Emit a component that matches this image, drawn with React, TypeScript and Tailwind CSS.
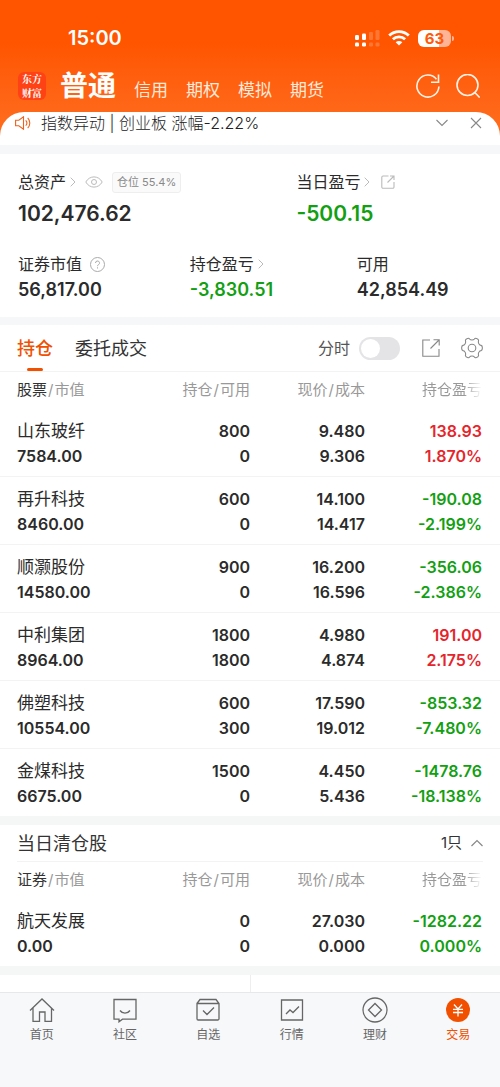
import { ReactNode, useState } from "react";

type Holding = {
  name: string;
  value: string;
  held: string;
  available: string;
  price: string;
  cost: string;
  profit: string;
  ratio: string;
};

const ACCOUNTS = ["信用", "期权", "模拟", "期货"];

const HOLDINGS: Holding[] = [
  { name: "山东玻纤", value: "7584.00", held: "800", available: "0", price: "9.480", cost: "9.306", profit: "138.93", ratio: "1.870%" },
  { name: "再升科技", value: "8460.00", held: "600", available: "0", price: "14.100", cost: "14.417", profit: "-190.08", ratio: "-2.199%" },
  { name: "顺灏股份", value: "14580.00", held: "900", available: "0", price: "16.200", cost: "16.596", profit: "-356.06", ratio: "-2.386%" },
  { name: "中利集团", value: "8964.00", held: "1800", available: "1800", price: "4.980", cost: "4.874", profit: "191.00", ratio: "2.175%" },
  { name: "佛塑科技", value: "10554.00", held: "600", available: "300", price: "17.590", cost: "19.012", profit: "-853.32", ratio: "-7.480%" },
  { name: "金煤科技", value: "6675.00", held: "1500", available: "0", price: "4.450", cost: "5.436", profit: "-1478.76", ratio: "-18.138%" },
];

const CLEARED: Holding[] = [
  { name: "航天发展", value: "0.00", held: "0", available: "0", price: "27.030", cost: "0.000", profit: "-1282.22", ratio: "0.000%" },
];

function profitColor(profit: string): string {
  return profit.startsWith("-") ? "text-[#12a012]" : "text-[#e5252b]";
}

function Icon({ className, children, box = 24 }: { className: string; children: ReactNode; box?: number }) {
  return (
    <svg
      viewBox={`0 0 ${box} ${box}`}
      className={`shrink-0 ${className}`}
      fill="none"
      stroke="currentColor"
      strokeWidth="1.3"
      aria-hidden="true"
    >
      {children}
    </svg>
  );
}

function Chevron() {
  return (
    <svg viewBox="0 0 6 10" className="h-[10px] w-[6px] shrink-0 text-[#bbbbbb]" fill="none" stroke="currentColor" aria-hidden="true">
      <path d="M.7.7 5 5 .7 9.3" />
    </svg>
  );
}

function StatusBar() {
  return (
    <div className="flex h-6 items-center justify-between pr-[46px] pl-[68px] text-white">
      <span className="text-[20px] leading-6 font-semibold">15:00</span>
      <div className="flex items-center gap-2">
        <svg viewBox="0 0 25 17" className="h-[17px] w-[25px]" fill="currentColor" aria-hidden="true">
          <rect x="0" y="5" width="4" height="5" rx="1.2" />
          <rect x="7" y="3.5" width="4" height="6.5" rx="1.2" />
          <rect x="0" y="12.5" width="4" height="4" rx="1.2" />
          <rect x="7" y="12.5" width="4" height="4" rx="1.2" />
          <g opacity="0.2">
            <rect x="14" y="2" width="4" height="8" rx="1.2" />
            <rect x="20.5" y="0" width="4" height="10" rx="1.2" />
            <rect x="14" y="12.5" width="4" height="4" rx="1.2" />
            <rect x="20.5" y="12.5" width="4" height="4" rx="1.2" />
          </g>
        </svg>
        <svg viewBox="0 0 22 16" className="h-4 w-[22px]" fill="none" stroke="currentColor" strokeWidth="2.8" aria-hidden="true">
          <path d="M1.2 5.6a14 14 0 0 1 19.6 0" />
          <path d="M4.9 9.3a8.7 8.7 0 0 1 12.2 0" />
          <path d="M11 15.6 7.7 12.3a4.7 4.7 0 0 1 6.6 0z" fill="currentColor" stroke="none" />
        </svg>
        <div className="flex items-center gap-px">
          <span className="h-[17px] w-[33px] rounded-[6px] bg-linear-to-r from-white from-63% to-[#ffb595] to-63% text-center text-[15px] leading-[17px] font-bold text-[#ff5a08]">
            63
          </span>
          <span className="h-[5px] w-[2px] rounded-r-sm bg-[#ffb595]" />
        </div>
      </div>
    </div>
  );
}

function Header() {
  return (
    <header className="bg-linear-to-b from-[#ff5500] from-30% to-[#ff7020] pt-[26px]">
      <StatusBar />
      <div className="mt-4 mb-[6px] flex h-10 items-center pr-5 pl-[18px] text-white">
        <div className="flex h-7 w-7 items-center justify-center rounded-[6px] bg-[#ff4215] font-['Noto_Serif_CJK_SC','Noto_Sans_CJK_SC',serif] text-[10px] leading-[14px] font-bold">
          <span>东方<br />财富</span>
        </div>
        <nav className="ml-[14px] flex items-baseline gap-[18px]">
          <a href="#normal" className="text-[28px] leading-10 font-bold">普通</a>
          {ACCOUNTS.map((a) => (
            <a key={a} href={`#${a}`} className="text-[17px] text-[#ffeadb]">{a}</a>
          ))}
        </nav>
        <div className="ml-auto flex items-center gap-4 text-[#fff3e8]">
          <button type="button" aria-label="刷新">
            <Icon className="h-6 w-6">
              <path d="M22.9 12.5A11 11 0 1 1 20.5 5.2M22.5.5V8.2H15" strokeWidth="1.6" />
            </Icon>
          </button>
          <button type="button" aria-label="搜索">
            <Icon className="h-6 w-6">
              <circle cx="11.5" cy="11" r="10.5" strokeWidth="1.6" />
              <path d="m18.8 18.5 4.9 5" strokeWidth="1.6" />
            </Icon>
          </button>
        </div>
      </div>
      <div className="flex h-[33px] items-center rounded-t-[24px] bg-white pr-[18px] pb-[11px] pl-[15px]">
        <svg viewBox="0 0 16 14" className="h-[14px] w-4 text-[#f0601a]" fill="none" stroke="currentColor" strokeWidth="1.1" aria-hidden="true">
          <path d="M.6 4.2h3.2L8.5.8v12.4L3.8 9.8H.6zM10.7 4.3a4 4 0 0 1 0 5.4M12.7 1.8a7.5 7.5 0 0 1 0 10.4" />
        </svg>
        <p className="ml-[10px] text-[16px] leading-[22px] font-light text-[#222222]">指数异动 | 创业板 涨幅-2.22%</p>
        <button type="button" aria-label="展开" className="ml-auto text-[#888888]">
          <Icon className="h-3 w-3" box={12}>
            <path d="m.5 3 5.5 5.5L11.5 3" strokeWidth="1.1" />
          </Icon>
        </button>
        <button type="button" aria-label="关闭" className="ml-[22px] text-[#888888]">
          <Icon className="h-3 w-3" box={12}>
            <path d="m1 1 10 10M11 1 1 11" strokeWidth="1.1" />
          </Icon>
        </button>
      </div>
    </header>
  );
}

function Summary() {
  return (
    <section className="border-t-9 border-b-8 border-[#f5f7f9] bg-white px-[18px] pt-4 pb-[13px] text-[#2b2b2b]">
      <div className="flex">
        <div className="w-[60%]">
          <div className="flex h-6 items-center text-[16px]">
            <span className="mr-1">总资产</span>
            <Chevron />
            <svg viewBox="0 0 18 12" className="ml-[9px] h-3 w-[18px] text-[#bbbbbb]" fill="none" stroke="currentColor" aria-hidden="true">
              <path d="M.8 6C4.5-.8 13.5-.8 17.2 6 13.5 12.8 4.5 12.8.8 6z" />
              <circle cx="9" cy="6" r="2.5" />
            </svg>
            <span className="ml-[9px] rounded-[3px] border border-[#eeeeee] bg-[#fafafa] px-1 text-[11px] leading-[19px] text-[#888888]">
              仓位 55.4%
            </span>
          </div>
          <div className="mt-1 text-[21px] leading-8 font-semibold">102,476.62</div>
        </div>
        <div>
          <div className="flex h-6 items-center text-[16px]">
            <span className="mr-1">当日盈亏</span>
            <Chevron />
            <Icon className="ml-[11px] h-[14px] w-[14px] text-[#bbbbbb]" box={14}>
              <path d="M7.5 1H2A1.2 1.2 0 0 0 .8 2.2V12A1.2 1.2 0 0 0 2 13.2h9.8A1.2 1.2 0 0 0 13 12V7M9 1h4v4M13 1 6.5 7.5" strokeWidth="1.1" />
            </Icon>
          </div>
          <div className="mt-1 text-[21px] leading-8 font-semibold text-[#12a012]">-500.15</div>
        </div>
      </div>
      <div className="mt-[22px] flex">
        <div className="w-[37%]">
          <div className="flex h-6 items-center text-[16px]">
            证券市值
            <Icon className="ml-2 h-[15px] w-[15px] text-[#aaaaaa]" box={15}>
              <circle cx="7.5" cy="7.5" r="7" strokeWidth="1" />
              <path d="M5.5 6a2 2 0 1 1 3 1.7c-.7.4-1 .7-1 1.5M7.5 10.300v1.2" strokeWidth="1" />
            </Icon>
          </div>
          <div className="text-[18px] leading-7 font-semibold">56,817.00</div>
        </div>
        <div className="w-[36%]">
          <div className="flex h-6 items-center text-[16px]">
            <span className="mr-1">持仓盈亏</span>
            <Chevron />
          </div>
          <div className="text-[18px] leading-7 font-semibold text-[#12a012]">-3,830.51</div>
        </div>
        <div>
          <div className="flex h-6 items-center text-[16px]">可用</div>
          <div className="text-[18px] leading-7 font-semibold">42,854.49</div>
        </div>
      </div>
    </section>
  );
}

function HoldingsTable({ label, rows }: { label: string; rows: Holding[] }) {
  return (
    <table className="w-full table-fixed border-collapse text-right text-[#2b2b2b]">
      <thead>
        <tr className="h-9 text-[15px] text-[#999999] [&>th]:font-normal">
          <th className="w-[30%] pl-[17px] text-left">
            <span className="text-[#333333]">{label}</span>
            <span className="mx-px">/</span>市值
          </th>
          <th className="w-[20%]">持仓<span className="mx-px">/</span>可用</th>
          <th className="w-[23%]">现价<span className="mx-px">/</span>成本</th>
          <th className="w-[27%] pr-[18px]">
            <span className="[mask-image:linear-gradient(to_right,black_70%,transparent)]">持仓盈亏</span>
          </th>
        </tr>
      </thead>
      <tbody>
        {rows.map((r) => (
          <tr key={r.name} className="h-[68px] border-b border-[#f3f3f3] text-[16px] leading-[25px] font-semibold last:border-b-0 [&>td]:pt-1">
            <td className="pl-[17px] text-left">
              <div className="text-[17px] font-normal">{r.name}</div>
              <div>{r.value}</div>
            </td>
            <td>
              <div>{r.held}</div>
              <div>{r.available}</div>
            </td>
            <td>
              <div>{r.price}</div>
              <div>{r.cost}</div>
            </td>
            <td className={`pr-[18px] ${profitColor(r.profit)}`}>
              <div>{r.profit}</div>
              <div>{r.ratio}</div>
            </td>
          </tr>
        ))}
      </tbody>
    </table>
  );
}

function Holdings() {
  const [intraday, setIntraday] = useState(false);

  return (
    <section className="bg-white">
      <div className="flex h-[47px] items-stretch border-b border-[#f3f3f3] px-[17px] text-[18px] text-[#333333]">
        <button type="button" className="relative font-medium text-[#f05000]">
          持仓
          <span className="absolute bottom-0 left-1/2 h-[3px] w-4 -translate-x-1/2 rounded-full bg-[#f05000]" />
        </button>
        <button type="button" className="ml-[22px]">委托成交</button>
        <label className="ml-auto flex items-center gap-[9px] text-[16px] text-[#555555]">
          分时
          <input
            type="checkbox"
            checked={intraday}
            onChange={(e) => setIntraday(e.target.checked)}
            className="h-[23px] w-[41px] appearance-none rounded-full bg-[#e4e4e6] p-[2px] before:block before:h-[19px] before:w-[19px] before:rounded-full before:bg-white checked:bg-[#f05000] checked:before:ml-auto"
          />
        </label>
        <button type="button" aria-label="分享" className="ml-[22px] text-[#888888]">
          <Icon className="h-[18px] w-[18px]" box={18}>
            <path d="M8 1H.8v16.3H17V10M11.5.8h5.7v5.7M17 1 8.5 9.5" strokeWidth="1.1" />
          </Icon>
        </button>
        <button type="button" aria-label="设置" className="ml-[21px] text-[#888888]">
          <Icon className="h-[22px] w-[22px]" box={22}>
            <path
              d="M6.6 1.4Q8 .8 8.6 2 9.3 3 11 3 12.7 3 13.4 2 14 .8 15.4 1.4L16.9 2.3Q18 3.1 17.4 4.4 17.2 6 18 7 18.8 8.3 20 8.4 21.3 8.8 21.3 10.2V11.8Q21.3 13.2 20 13.6 18.8 13.7 18 15 17.2 16 17.4 17.6 18 18.9 16.9 19.7L15.4 20.6Q14 21.2 13.4 20 12.7 19 11 19 9.3 19 8.6 20 8 21.2 6.6 20.6L5.1 19.7Q4 18.9 4.6 17.6 4.8 16 4 15 3.2 13.7 2 13.6.7 13.2.7 11.8V10.2Q.7 8.8 2 8.4 3.2 8.3 4 7 4.8 6 4.6 4.4 4 3.1 5.1 2.3z"
              strokeWidth="1.1"
            />
            <circle cx="11" cy="11" r="3.8" strokeWidth="1.1" />
          </Icon>
        </button>
      </div>
      <HoldingsTable label="股票" rows={HOLDINGS} />
    </section>
  );
}

function Cleared() {
  return (
    <section className="border-y-[9px] border-[#f5f7f7] bg-white">
      <div className="mx-[17px] flex h-[37px] items-center border-b border-[#f3f3f3] text-[18px] text-[#333333]">
        <h2>当日清仓股</h2>
        <button type="button" className="ml-auto flex items-center gap-[9px] text-[15px]">
          1只
          <Icon className="h-3 w-3 text-[#888888]" box={12}>
            <path d="M.5 9 6 3.5 11.5 9" strokeWidth="1.2" />
          </Icon>
        </button>
      </div>
      <HoldingsTable label="证券" rows={CLEARED} />
    </section>
  );
}

const TABS: { label: string; icon: ReactNode }[] = [
  { label: "首页", icon: <path d="M1 13.5 13 2l12 11.5M4 11v13.3h6.5V15H16v9.3h6.5V11" /> },
  { label: "社区", icon: <path d="M2 2.5h22v19.7H10.5L7 24.8v-2.6H2zM8 13.5c2.5 3.5 7.5 3.5 10 0" /> },
  { label: "自选", icon: <path d="M2 6.5 5 2.5h16l3 4v15.3a1.2 1.2 0 0 1-1.2 1.2H3.2A1.2 1.2 0 0 1 2 21.8V6.5h22M8 13.5l4 4 7-7" /> },
  { label: "行情", icon: <path d="M2.5 3h21v20h-21zM7 17l4-4 3 2.5L20 9.5" /> },
  {
    label: "理财",
    icon: (
      <>
        <circle cx="13" cy="13" r="12" />
        <path d="m13 6.5 6.5 6.5-6.5 6.5L6.5 13z" />
      </>
    ),
  },
  {
    label: "交易",
    icon: (
      <>
        <circle cx="13" cy="13" r="12" fill="currentColor" stroke="none" />
        <path d="m9 7.5 4 4.5 4-4.5M8 12.3h10M8 15.5h10M13 12v7.5" stroke="white" />
      </>
    ),
  },
];

function TabBar() {
  return (
    <nav className="flex grow border-t border-[#e6e8ea] bg-[#f7f8fa] pt-1 pb-10">
      {TABS.map((t) => (
        <a
          key={t.label}
          href={`#${t.label}`}
          className={`flex flex-1 flex-col items-center gap-[2px] text-[12px] leading-5 ${t.label === "交易" ? "text-[#f05000]" : "text-[#666666]"}`}
        >
          <Icon className="h-[26px] w-[26px]" box={26}>{t.icon}</Icon>
          {t.label}
        </a>
      ))}
    </nav>
  );
}

export default function App() {
  return (
    <div className="flex min-h-screen flex-col bg-white font-['Inter','Noto_Sans_CJK_SC',sans-serif]">
      <Header />
      <main>
        <Summary />
        <Holdings />
        <Cleared />
        <div className="flex h-[17px] justify-center">
          <span className="w-px bg-[#eeeeee]" />
        </div>
      </main>
      <TabBar />
    </div>
  );
}
